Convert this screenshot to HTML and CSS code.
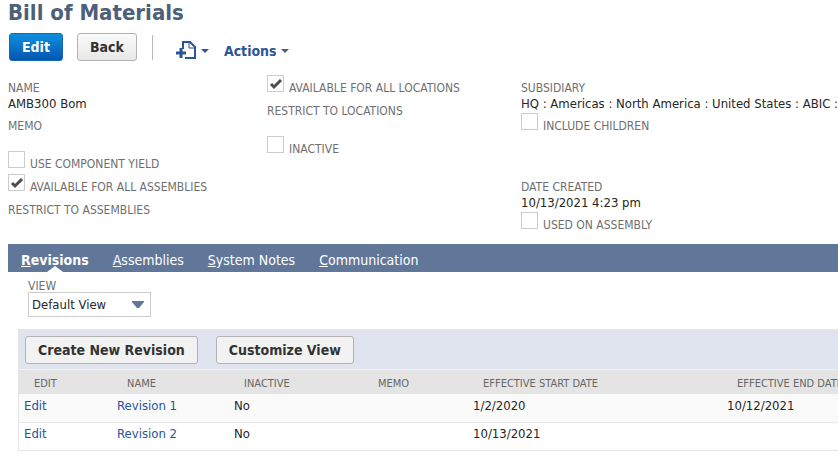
FILE: index.html
```html
<!DOCTYPE html>
<html lang="en">
<head>
  <meta charset="UTF-8" />
  <meta name="viewport" content="width=device-width, initial-scale=1.0" />
  <title>Bill of Materials</title>
  <link rel="stylesheet" href="styles.css">
</head>
<body>

  <h1>Bill of Materials</h1>

  <!-- Record toolbar -->
  <div class="toolbar">
    <button type="button" class="btn btn-primary">Edit</button>
    <button type="button" class="btn">Back</button>
    <span class="divider"></span>
    <button type="button" class="menu-button" aria-label="Create new">
      <svg width="33" height="20" viewBox="0 0 33 20">
        <path d="M7 8V1H14L19 6V17H9" fill="none" stroke="#2a5699" stroke-width="2" />
        <path d="M13 1V7H19" fill="none" stroke="#2a5699" stroke-width="1" />
        <path d="M0 12H10M5 7V17" stroke="#2a5699" stroke-width="3" />
        <path d="M25 8H33L29 12Z" fill="#2a5699" />
      </svg>
    </button>
    <button type="button" class="menu-button">Actions
      <svg width="8" height="4" viewBox="0 0 8 4"><path d="M0 0H8L4 4Z" fill="#4d5f79" /></svg>
    </button>
  </div>

  <!-- Record fields -->
  <div class="fields">
    <div class="column">
      <div class="field">
        <span class="label">NAME</span>
        <span class="value">AMB300 Bom</span>
      </div>
      <div class="field tall"><span class="label">MEMO</span></div>
      <div class="check">
        <input type="checkbox" id="componentYield" />
        <label for="componentYield">USE COMPONENT YIELD</label>
      </div>
      <div class="check">
        <input type="checkbox" id="allAssemblies" checked />
        <label for="allAssemblies">AVAILABLE FOR ALL ASSEMBLIES</label>
      </div>
      <div class="field"><span class="label">RESTRICT TO ASSEMBLIES</span></div>
    </div>

    <div class="column">
      <div class="check">
        <input type="checkbox" id="allLocations" checked />
        <label for="allLocations">AVAILABLE FOR ALL LOCATIONS</label>
      </div>
      <div class="field tall"><span class="label">RESTRICT TO LOCATIONS</span></div>
      <div class="check">
        <input type="checkbox" id="inactive" />
        <label for="inactive">INACTIVE</label>
      </div>
    </div>

    <div class="column">
      <div class="field">
        <span class="label">SUBSIDIARY</span>
        <span class="value">HQ : Americas : North America : United States : ABIC :</span>
      </div>
      <div class="check spaced">
        <input type="checkbox" id="includeChildren" />
        <label for="includeChildren">INCLUDE CHILDREN</label>
      </div>
      <div class="field">
        <span class="label">DATE CREATED</span>
        <span class="value">10/13/2021 4:23 pm</span>
      </div>
      <div class="check">
        <input type="checkbox" id="usedOnAssembly" />
        <label for="usedOnAssembly">USED ON ASSEMBLY</label>
      </div>
    </div>
  </div>

  <!-- Subtabs -->
  <nav class="tabs">
    <a href="#revisions" class="active"><u>R</u>evisions</a>
    <a href="#assemblies"><u>A</u>ssemblies</a>
    <a href="#notes"><u>S</u>ystem Notes</a>
    <a href="#communication"><u>C</u>ommunication</a>
  </nav>

  <div class="view">
    <label for="view">VIEW</label>
    <select id="view">
      <option>Default View</option>
    </select>
  </div>

  <!-- Revisions list -->
  <div class="list" id="revisions">
    <div class="list-bar">
      <button type="button" class="btn">Create New Revision</button>
      <button type="button" class="btn">Customize View</button>
    </div>
    <table>
      <colgroup>
        <col class="col-edit"><col class="col-name"><col class="col-inactive">
        <col class="col-memo"><col class="col-start"><col>
      </colgroup>
      <thead>
        <tr>
          <th>EDIT</th>
          <th>NAME</th>
          <th>INACTIVE</th>
          <th>MEMO</th>
          <th>EFFECTIVE START DATE</th>
          <th>EFFECTIVE END DATE</th>
        </tr>
      </thead>
      <tbody>
        <tr>
          <td><a href="#edit1">Edit</a></td>
          <td><a href="#rev1">Revision 1</a></td>
          <td>No</td>
          <td></td>
          <td>1/2/2020</td>
          <td>10/12/2021</td>
        </tr>
        <tr>
          <td><a href="#edit2">Edit</a></td>
          <td><a href="#rev2">Revision 2</a></td>
          <td>No</td>
          <td></td>
          <td>10/13/2021</td>
          <td></td>
        </tr>
      </tbody>
    </table>
  </div>

</body>
</html>
```
FILE: styles.css
```css
* {
  box-sizing: border-box;
}

body {
  font-family: Tahoma, "DejaVu Sans Condensed", "Noto Sans", sans-serif;
  font-size: 13px;
  line-height: 16px;
  color: #262626;
  background-color: #fff;
  margin: 0;
  padding-left: 8px;
  overflow-x: hidden;
}

h1 {
  margin: 0;
  font-size: 22px;
  line-height: 26px;
  color: #4d5f79;
}

/* Toolbar */
.toolbar {
  display: flex;
  align-items: center;
  margin-top: 7px;
  padding-left: 1px;
}

.btn {
  height: 28px;
  padding: 0 12px;
  font-family: inherit;
  font-size: 14px;
  font-weight: bold;
  color: #333;
  background: linear-gradient(#fafafa, #e8e8e8);
  border: 1px solid #b2b2b2;
  border-radius: 3px;
  cursor: pointer;
}

.btn-primary {
  color: #fff;
  background: linear-gradient(#0f8fe0, #0455b0);
  border-color: #1668b5;
}

.toolbar .btn + .btn {
  margin-left: 14px;
}

.divider {
  width: 1px;
  height: 25px;
  margin: 0 8px 0 15px;
  background-color: #b8b8b8;
}

.menu-button {
  display: flex;
  align-items: center;
  gap: 4px;
  margin-left: 15px;
  padding: 7px 0 0;
  font-family: inherit;
  font-size: 14px;
  font-weight: bold;
  color: #2a5699;
  background: none;
  border: none;
  cursor: pointer;
}

/* Record fields */
.fields {
  display: grid;
  grid-template-columns: 259fr 254fr minmax(0, 317fr);
  margin-top: 14px;
  white-space: nowrap;
}

.label,
.check label,
.view label {
  color: #6f6f6f;
  font-size: 12px;
}

.field {
  display: flex;
  flex-direction: column;
  padding-top: 5px;
  min-height: 23px;
}

.value {
  margin-bottom: 1px;
}

.column .tall {
  min-height: 38px;
}

.check {
  display: flex;
  align-items: flex-start;
  gap: 5px;
  height: 23px;
}

.check label {
  padding-top: 5px;
}

.check.spaced {
  height: 61px;
}

.check input {
  appearance: none;
  width: 17px;
  height: 17px;
  margin: 0;
  border: 1px solid #ccc;
  background-color: #fff;
}

.check input:checked {
  background-image: url("data:image/svg+xml,%3Csvg xmlns='http://www.w3.org/2000/svg' viewBox='0 0 15 15'%3E%3Cpath d='M3 8L6 11L13 4' fill='none' stroke='%234d4d4d' stroke-width='3'/%3E%3C/svg%3E");
}

/* Subtabs */
.tabs {
  display: flex;
  gap: 24px;
  height: 28px;
  margin-top: 9px;
  padding-left: 13px;
  background-color: #607799;
}

.tabs a {
  position: relative;
  font-size: 14px;
  line-height: 32px;
  color: #fff;
  text-decoration: none;
}

.tabs .active {
  font-weight: bold;
}

.tabs .active::after {
  content: "";
  position: absolute;
  left: 50%;
  bottom: 0;
  margin-left: -8px;
  border: 8px solid transparent;
  border-top: none;
  border-bottom: 6px solid #fff;
}

/* View filter */
.view {
  display: flex;
  flex-direction: column;
  align-items: flex-start;
  padding: 8px 0 12px 20px;
}

.view label {
  line-height: 12px;
}

.view select {
  appearance: none;
  width: 123px;
  height: 25px;
  padding: 0 3px;
  font-family: inherit;
  font-size: 13px;
  color: #262626;
  border: 1px solid #ccc;
  border-radius: 0;
  background: #fff url("data:image/svg+xml,%3Csvg xmlns='http://www.w3.org/2000/svg' width='12' height='7'%3E%3Cpath d='M0 0H12V1L7 7H5L0 1Z' fill='%23607799'/%3E%3C/svg%3E") no-repeat right 6px center;
}

/* Revisions list */
.list {
  margin-left: 10px;
  border-left: 1px solid #e6e6e6;
}

.list-bar {
  display: flex;
  gap: 18px;
  height: 41px;
  padding: 7px 6px;
  background-color: #e0e4ee;
  border-bottom: 1px solid #f2f2f2;
}

.list-bar .btn {
  height: 28px;
  background: #f2f2f2;
}

table {
  width: 100%;
  table-layout: fixed;
  border-collapse: collapse;
  white-space: nowrap;
}

.col-edit {
  width: 93px;
}

.col-name {
  width: 117px;
}

.col-inactive {
  width: 134px;
}

.col-memo {
  width: 105px;
}

.col-start {
  width: 254px;
}

th {
  height: 24px;
  padding: 4px 0 0 15px;
  font-size: 11px;
  font-weight: normal;
  text-align: left;
  color: #666;
  background-color: #e4e4e4;
}

td {
  height: 28px;
  padding: 0 0 4px 5px;
  border-bottom: 1px solid #e6e6e6;
}

tbody tr:nth-child(odd) {
  background-color: #fafafa;
}

td a {
  color: #255599;
  text-decoration: none;
}
```
